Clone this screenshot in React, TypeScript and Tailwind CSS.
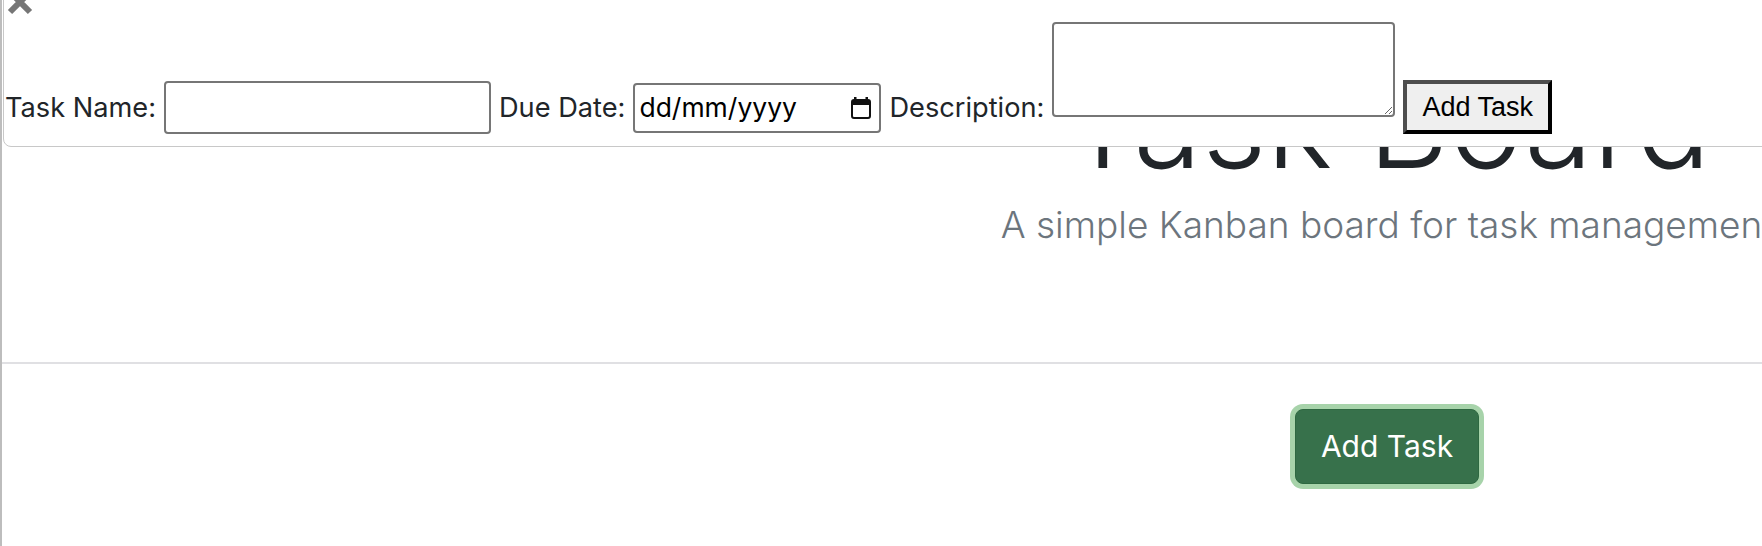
const sans = "font-['Inter','Liberation_Sans',sans-serif]";

function CalendarIcon() {
  return (
    <svg width="20" height="22" viewBox="0 0 20 22" className="shrink-0">
      <rect x="3" y="0" width="2.5" height="5" fill="#111" />
      <rect x="14.5" y="0" width="2.5" height="5" fill="#111" />
      <rect x="1" y="3" width="18" height="18" rx="2" fill="none" stroke="#111" strokeWidth="2" />
      <rect x="1" y="3" width="18" height="5" fill="#111" />
    </svg>
  );
}

function CloseIcon() {
  return (
    <svg width="28" height="28" viewBox="0 0 28 28">
      <path d="M4 4 L24 24 M24 4 L4 24" stroke="#767676" strokeWidth="6" />
    </svg>
  );
}

function TaskForm() {
  return (
    <div className="absolute left-[1px] top-[-10px] right-[-40px] bg-white border border-[#c8c8c8] rounded-bl-[8px] pt-[31px] pb-[12px] pl-[1px]">
      <button className="absolute left-[2px] top-[-3px]">
        <CloseIcon />
      </button>
      <form className={`flex items-end gap-[8px] text-[#212529] ${sans}`}>
        <label className="text-[27.2px] leading-[32px] mb-[10px]">Task Name:</label>
        <input type="text" className="w-[327px] h-[53px] border-2 border-[#767676] rounded-[4px] bg-white" />
        <label className="text-[27.2px] leading-[32px] mb-[10px]">Due Date:</label>
        <div className="w-[248px] h-[50px] mb-[1px] border-2 border-[#767676] rounded-[4px] bg-white flex items-center justify-between pl-[4px] pr-[8px] text-black text-[26.5px]">
          <span>dd/mm/yyyy</span>
          <CalendarIcon />
        </div>
        <label className="text-[27.2px] leading-[32px] mb-[10px]">Description:</label>
        <textarea className="w-[343px] h-[95px] mb-[17px] border-2 border-[#767676] rounded-[4px] bg-white" />
        <button
          type="button"
          className="w-[149px] h-[54px] border-4 border-t-[#4d4d4d] border-l-[#4d4d4d] border-r-black border-b-black bg-[#efefef] text-black text-[27px] font-['Liberation_Sans',Arial,sans-serif]"
        >
          Add Task
        </button>
      </form>
    </div>
  );
}

export default function App() {
  return (
    <div className={`relative w-[1762px] h-[546px] overflow-hidden bg-white border-l-2 border-[#bdbdbd] ${sans}`}>
      <main className="w-[2770px] text-center">
        <header className="pt-[60px]">
          <h1 className="text-[125px] font-light leading-none text-[#212529]">Task Board</h1>
          <p className="mt-[21px] text-[37px] font-light leading-none text-[#6c757d]">
            A simple Kanban board for task management
          </p>
        </header>
        <hr className="mt-[119px] border-t-2 border-[#e0e0e3]" />
        <div className="pt-[45px] flex justify-center">
          <button
            type="button"
            className="w-[184px] h-[75px] rounded-[8px] bg-[#37714b] border border-[#2e6841] text-white text-[30px] ring-[5px] ring-[#a7d3aa]"
          >
            Add Task
          </button>
        </div>
      </main>
      <TaskForm />
    </div>
  );
}
